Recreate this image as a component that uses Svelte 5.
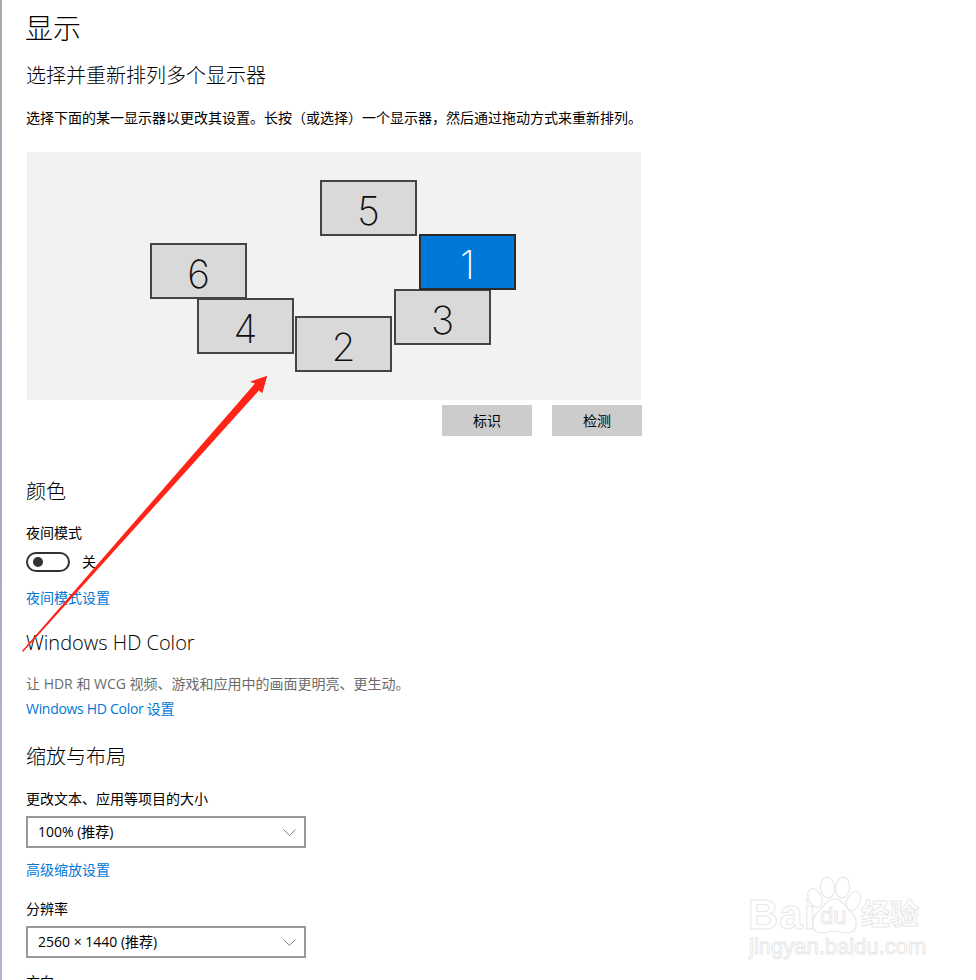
<script>
	const monitors = [
		{ n: 5, x: 293, y: 28 },
		{ n: 6, x: 123, y: 91 },
		{ n: 4, x: 170, y: 146 },
		{ n: 2, x: 268, y: 164 },
		{ n: 3, x: 367, y: 137 },
		{ n: 1, x: 392, y: 82, active: true }
	];
</script>

<div class="stripe">
	<main class="page">
		<h1>显示</h1>
		<h2 class="first">选择并重新排列多个显示器</h2>
		<p class="intro">选择下面的某一显示器以更改其设置。长按（或选择）一个显示器，然后通过拖动方式来重新排列。</p>

		<div class="canvas">
			{#each monitors as m}
				<div class="monitor" class:active={m.active} style="left: {m.x}px; top: {m.y}px">{m.n}</div>
			{/each}
		</div>
		<div class="actions">
			<button>标识</button>
			<button>检测</button>
		</div>

		<h2 class="color">颜色</h2>
		<div class="label night">夜间模式</div>
		<div class="toggle-row">
			<span class="toggle"><span class="knob"></span></span>
			<span class="state">关</span>
		</div>
		<a class="link night-link" href="#night">夜间模式设置</a>

		<h2 class="hd">Windows HD Color</h2>
		<p class="muted">让 HDR 和 WCG 视频、游戏和应用中的画面更明亮、更生动。</p>
		<a class="link hd-link" href="#hd">Windows HD Color 设置</a>

		<h2 class="scale">缩放与布局</h2>
		<div class="label change">更改文本、应用等项目的大小</div>
		<div class="select">
			<span>100% (推荐)</span>
			<svg width="13" height="7" viewBox="0 0 13 7"><path d="M.5.5 6.500 6.500 12.500.5" fill="none" stroke="#808080" stroke-width="1" /></svg>
		</div>
		<a class="link scale-link" href="#scale">高级缩放设置</a>
		<div class="label res">分辨率</div>
		<div class="select">
			<span>2560 × 1440 (推荐)</span>
			<svg width="13" height="7" viewBox="0 0 13 7"><path d="M.5.5 6.500 6.500 12.500.5" fill="none" stroke="#808080" stroke-width="1" /></svg>
		</div>
		<div class="label orient">方向</div>
	</main>
</div>

<!-- red annotation arrow drawn over the screenshot -->
<svg class="arrow" width="976" height="980" viewBox="0 0 976 980">
	<polygon points="22,651 255,383.500 250,381.700 267.300,375.700 262.300,393.300 259,390.500 23,652" fill="#fe2418" />
</svg>

<div class="watermark">
	<span class="wm-bai">Bai</span>
	<svg class="wm-paw" width="55" height="58" viewBox="0 0 55 58" fill="#fff" stroke="#e8e8e8" stroke-width="1.200">
		<ellipse cx="8" cy="22" rx="6.500" ry="10" transform="rotate(-25 8 22)" />
		<ellipse cx="20.500" cy="11.500" rx="7" ry="10.500" transform="rotate(-6 20.500 11.500)" />
		<ellipse cx="35.500" cy="11.500" rx="7" ry="10.500" transform="rotate(6 35.500 11.500)" />
		<ellipse cx="46.500" cy="25" rx="6.500" ry="10" transform="rotate(25 46.500 25)" />
		<path d="M27.500 23C36 23 38 31 44 36 52 43 51 57 40 57 35 57 32 55 27.500 55 23 55 20 57 15 57 4 57 3 43 11 36 17 31 19 23 27.500 23Z" />
	</svg>
	<span class="wm-du">du</span>
	<span class="wm-cn">经验</span>
	<span class="wm-url">jingyan.baidu.com</span>
</div>

<style>
	:global(body) {
		background: #fff;
	}

	.stripe {
		height: 980px;
		overflow: hidden;
		padding-left: 2px;
		background: linear-gradient(#a6a9b2, #a9aec2 60%, #bdb0c8);
	}

	.page {
		height: 980px;
		background: #fff;
		padding: 8px 0 0 24px;
		box-sizing: border-box;
		overflow: hidden;
		color: #000;
		font-family: "Open Sans", "Noto Sans CJK SC", sans-serif;
		font-size: 14px;
		line-height: 20px;
	}

	h1 {
		margin: 0 0 0 -1px;
		font-size: 28px;
		line-height: 40px;
		font-weight: 300;
	}

	h2 {
		margin: 0;
		font-size: 20px;
		line-height: 28px;
		font-weight: 300;
	}

	p {
		margin: 0;
	}

	.first { margin-top: 14px; }
	.color { margin-top: 42px; }
	.hd { margin-top: 21px; }
	.scale { margin-top: 24px; }

	.intro {
		margin-top: 18px;
	}

	.canvas {
		position: relative;
		width: 614px;
		height: 248px;
		margin: 24px 0 0 1px;
		background: #f2f2f2;
	}

	.monitor {
		position: absolute;
		box-sizing: border-box;
		width: 97px;
		height: 56px;
		padding-top: 5px;
		display: flex;
		align-items: center;
		justify-content: center;
		background: #d9d9d9;
		border: 2px solid #444;
		color: #111;
		font-family: Inter, sans-serif;
		font-size: 39px;
		font-weight: 200;
		line-height: 1;
	}

	.monitor.active {
		background: #0078d7;
		border-color: #2b2b2b;
		color: #fff;
	}

	.actions {
		display: flex;
		justify-content: flex-end;
		gap: 20px;
		width: 616px;
		margin-top: 5px;
	}

	button {
		width: 90px;
		height: 31px;
		border: 0;
		padding: 0;
		background: #ccc;
		color: #000;
		font: inherit;
	}

	.night { margin-top: 17px; }
	.change { margin-top: 18px; }
	.res { margin-top: 19px; }
	.orient { margin-top: 14px; }

	.toggle-row {
		display: flex;
		align-items: center;
		gap: 12px;
		height: 20px;
		margin-top: 9px;
	}

	.toggle {
		box-sizing: border-box;
		display: flex;
		align-items: center;
		width: 44px;
		height: 20px;
		padding-left: 5px;
		border: 2px solid #333;
		border-radius: 10px;
	}

	.knob {
		width: 10px;
		height: 10px;
		border-radius: 50%;
		background: #333;
	}

	.link {
		display: block;
		color: #0078d7;
		text-decoration: none;
	}

	.night-link { margin-top: 16px; }
	.hd-link { margin-top: 5px; letter-spacing: -0.3px; }
	.scale-link { margin-top: 12px; }

	.muted {
		margin-top: 17px;
		color: #6b6b6b;
	}

	.select {
		box-sizing: border-box;
		display: flex;
		align-items: center;
		justify-content: space-between;
		width: 280px;
		height: 32px;
		margin-top: 7px;
		padding: 0 8px 0 10px;
		border: 2px solid #999;
	}

	.arrow {
		position: absolute;
		left: 0;
		top: 0;
		pointer-events: none;
	}

	.watermark {
		position: absolute;
		left: 745px;
		top: 872px;
		width: 190px;
		height: 90px;
		font-family: "Liberation Sans", "Noto Sans CJK SC", sans-serif;
		color: #fff;
		-webkit-text-stroke: 1px #e8e8e8;
		font-weight: 700;
	}

	.watermark span {
		position: absolute;
		white-space: nowrap;
		line-height: 1;
	}

	.wm-paw {
		position: absolute;
		left: 62px;
		top: 4px;
	}

	.wm-bai { left: 3px; top: 22px; font-size: 42px; letter-spacing: 1px; }
	.wm-du { left: 75px; top: 32px; font-size: 24px; font-weight: 400; }
	.wm-cn { left: 116px; top: 29px; font-size: 29px; }
	.wm-url { left: 4px; top: 64px; font-size: 22px; font-weight: 400; }
</style>
